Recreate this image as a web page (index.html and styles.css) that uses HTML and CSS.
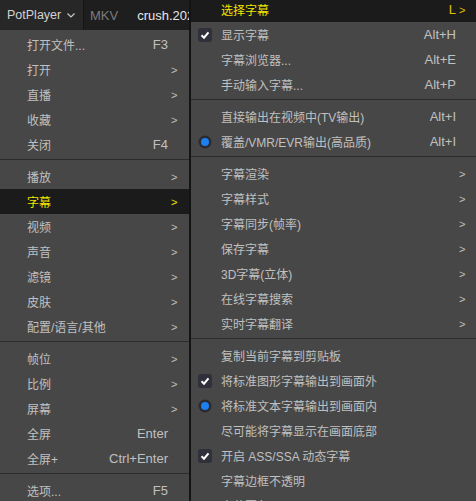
FILE: index.html
```html
<html>
<head>
<meta charset="UTF-8">
<link rel="stylesheet" href="styles.css">
</head>
<body>
<div class="barra">
	<div class="marca">PotPlayer
		<svg class="flecha" width="8" height="5" viewBox="0 0 8 5"><polyline points="0.5,0.5 4,4 7.5,0.5" fill="none" stroke="#c8c8c8" stroke-width="1.2"/></svg>
	</div>
	<div class="archivo"><span class="formato">MKV</span><span class="raya"></span><span class="nombre">crush.202</span></div>
</div>

<div class="menu principal">
	<div class="fila"><span class="txt">打开文件...</span><span class="atajo">F3</span><span class="sub"></span></div>
	<div class="fila"><span class="txt">打开</span><span class="atajo"></span><span class="sub">&gt;</span></div>
	<div class="fila"><span class="txt">直播</span><span class="atajo"></span><span class="sub">&gt;</span></div>
	<div class="fila"><span class="txt">收藏</span><span class="atajo"></span><span class="sub">&gt;</span></div>
	<div class="fila"><span class="txt">关闭</span><span class="atajo">F4</span><span class="sub"></span></div>
	<div class="sep"></div>
	<div class="fila"><span class="txt">播放</span><span class="atajo"></span><span class="sub">&gt;</span></div>
	<div class="fila activa"><span class="txt">字幕</span><span class="atajo"></span><span class="sub">&gt;</span></div>
	<div class="fila"><span class="txt">视频</span><span class="atajo"></span><span class="sub">&gt;</span></div>
	<div class="fila"><span class="txt">声音</span><span class="atajo"></span><span class="sub">&gt;</span></div>
	<div class="fila"><span class="txt">滤镜</span><span class="atajo"></span><span class="sub">&gt;</span></div>
	<div class="fila"><span class="txt">皮肤</span><span class="atajo"></span><span class="sub">&gt;</span></div>
	<div class="fila"><span class="txt">配置/语言/其他</span><span class="atajo"></span><span class="sub">&gt;</span></div>
	<div class="sep"></div>
	<div class="fila"><span class="txt">帧位</span><span class="atajo"></span><span class="sub">&gt;</span></div>
	<div class="fila"><span class="txt">比例</span><span class="atajo"></span><span class="sub">&gt;</span></div>
	<div class="fila"><span class="txt">屏幕</span><span class="atajo"></span><span class="sub">&gt;</span></div>
	<div class="fila"><span class="txt">全屏</span><span class="atajo">Enter</span><span class="sub"></span></div>
	<div class="fila"><span class="txt">全屏+</span><span class="atajo">Ctrl+Enter</span><span class="sub"></span></div>
	<div class="sep"></div>
	<div class="fila"><span class="txt">选项...</span><span class="atajo">F5</span><span class="sub"></span></div>
</div>

<div class="menu submenu">
	<div class="fila activa"><span class="ico"></span><span class="txt">选择字幕</span><span class="atajo">L</span><span class="sub">&gt;</span></div>
	<div class="fila"><span class="ico"><svg width="14" height="14" viewBox="0 0 14 14"><rect width="14" height="14" rx="3" fill="#30303a"/><polyline points="3.5,7.2 6,9.7 10.5,4.3" fill="none" stroke="#fff" stroke-width="2"/></svg></span><span class="txt">显示字幕</span><span class="atajo">Alt+H</span><span class="sub"></span></div>
	<div class="fila"><span class="ico"></span><span class="txt">字幕浏览器...</span><span class="atajo">Alt+E</span><span class="sub"></span></div>
	<div class="fila"><span class="ico"></span><span class="txt">手动输入字幕...</span><span class="atajo">Alt+P</span><span class="sub"></span></div>
	<div class="sep"></div>
	<div class="fila"><span class="ico"></span><span class="txt">直接输出在视频中(TV输出)</span><span class="atajo">Alt+I</span><span class="sub"></span></div>
	<div class="fila"><span class="ico"><svg width="14" height="14" viewBox="0 0 14 14"><circle cx="7" cy="7" r="6.5" fill="#2a2a31"/><circle cx="7" cy="7" r="4" fill="#1f7ff0"/></svg></span><span class="txt">覆盖/VMR/EVR输出(高品质)</span><span class="atajo">Alt+I</span><span class="sub"></span></div>
	<div class="sep"></div>
	<div class="fila"><span class="ico"></span><span class="txt">字幕渲染</span><span class="atajo"></span><span class="sub">&gt;</span></div>
	<div class="fila"><span class="ico"></span><span class="txt">字幕样式</span><span class="atajo"></span><span class="sub">&gt;</span></div>
	<div class="fila"><span class="ico"></span><span class="txt">字幕同步(帧率)</span><span class="atajo"></span><span class="sub">&gt;</span></div>
	<div class="fila"><span class="ico"></span><span class="txt">保存字幕</span><span class="atajo"></span><span class="sub">&gt;</span></div>
	<div class="fila"><span class="ico"></span><span class="txt">3D字幕(立体)</span><span class="atajo"></span><span class="sub">&gt;</span></div>
	<div class="fila"><span class="ico"></span><span class="txt">在线字幕搜索</span><span class="atajo"></span><span class="sub">&gt;</span></div>
	<div class="fila"><span class="ico"></span><span class="txt">实时字幕翻译</span><span class="atajo"></span><span class="sub">&gt;</span></div>
	<div class="sep"></div>
	<div class="fila"><span class="ico"></span><span class="txt">复制当前字幕到剪贴板</span><span class="atajo"></span><span class="sub"></span></div>
	<div class="fila"><span class="ico"><svg width="14" height="14" viewBox="0 0 14 14"><rect width="14" height="14" rx="3" fill="#30303a"/><polyline points="3.5,7.2 6,9.7 10.5,4.3" fill="none" stroke="#fff" stroke-width="2"/></svg></span><span class="txt">将标准图形字幕输出到画面外</span><span class="atajo"></span><span class="sub"></span></div>
	<div class="fila"><span class="ico"><svg width="14" height="14" viewBox="0 0 14 14"><circle cx="7" cy="7" r="6.5" fill="#2a2a31"/><circle cx="7" cy="7" r="4" fill="#1f7ff0"/></svg></span><span class="txt">将标准文本字幕输出到画面内</span><span class="atajo"></span><span class="sub"></span></div>
	<div class="fila"><span class="ico"></span><span class="txt">尽可能将字幕显示在画面底部</span><span class="atajo"></span><span class="sub"></span></div>
	<div class="fila"><span class="ico"><svg width="14" height="14" viewBox="0 0 14 14"><rect width="14" height="14" rx="3" fill="#30303a"/><polyline points="3.5,7.2 6,9.7 10.5,4.3" fill="none" stroke="#fff" stroke-width="2"/></svg></span><span class="txt">开启 ASS/SSA 动态字幕</span><span class="atajo"></span><span class="sub"></span></div>
	<div class="fila"><span class="ico"></span><span class="txt">字幕边框不透明</span><span class="atajo"></span><span class="sub"></span></div>
	<div class="fila"><span class="ico"></span><span class="txt">字幕圆角</span><span class="atajo"></span><span class="sub"></span></div>
</div>
</body>
</html>
```

FILE: styles.css
```css
body{
	margin:0;
	width:476px;
	height:501px;
	overflow:hidden;
	position:relative;
	background-color:#1e1e1e;
	font-family:"Liberation Sans","Noto Sans CJK SC",sans-serif;
}
.barra{
	display:flex;
	width:189px;
	height:30px;
	overflow:hidden;
	background-color:#1e1e1e;
}
.marca{
	display:flex;
	align-items:center;
	width:76px;
	flex-shrink:0;
	padding-left:7px;
	background-color:#272727;
	color:#d2d2d2;
	font-size:12.5px;
}
.flecha{
	margin-left:6px;
	margin-top:1px;
}
.archivo{
	display:flex;
	align-items:center;
	flex:1;
	overflow:hidden;
	border-left:1px solid #161616;
	padding-left:6px;
	font-size:13px;
	white-space:nowrap;
}
.formato{
	color:#7c7c7c;
}
.raya{
	width:1px;
	height:10px;
	background-color:#4a4a4a;
	margin:0 10px 0 9px;
}
.nombre{
	color:#e6e6e6;
}
.menu{
	position:absolute;
	background-color:#474747;
	color:#c0c0c0;
	font-size:12px;
}
.principal{
	top:30px;
	left:0;
	width:189px;
	padding-top:2px;
}
.submenu{
	top:-3px;
	left:189px;
	width:286px;
	border-left:2px solid #141414;
}
.fila{
	display:flex;
	align-items:center;
	height:25px;
	white-space:nowrap;
}
.principal .txt{
	padding-left:27px;
}
.txt{
	flex:1;
}
.atajo{
	font-size:13px;
	padding-right:3px;
}
.sub{
	width:18px;
	font-size:11px;
	box-sizing:border-box;
}
.ico{
	width:30px;
	height:14px;
	padding-left:7px;
	box-sizing:border-box;
	display:flex;
}
.activa{
	background-color:#1b1b1b;
	color:#f2e400;
}
.submenu .activa .atajo{
	color:#e2c200;
}
.submenu .activa .sub{
	color:#e2c200;
}
.sep{
	height:7px;
	box-sizing:border-box;
	border-bottom:4px solid #474747;
	border-top:2px solid #474747;
	background-color:#2c2c2c;
}
```
